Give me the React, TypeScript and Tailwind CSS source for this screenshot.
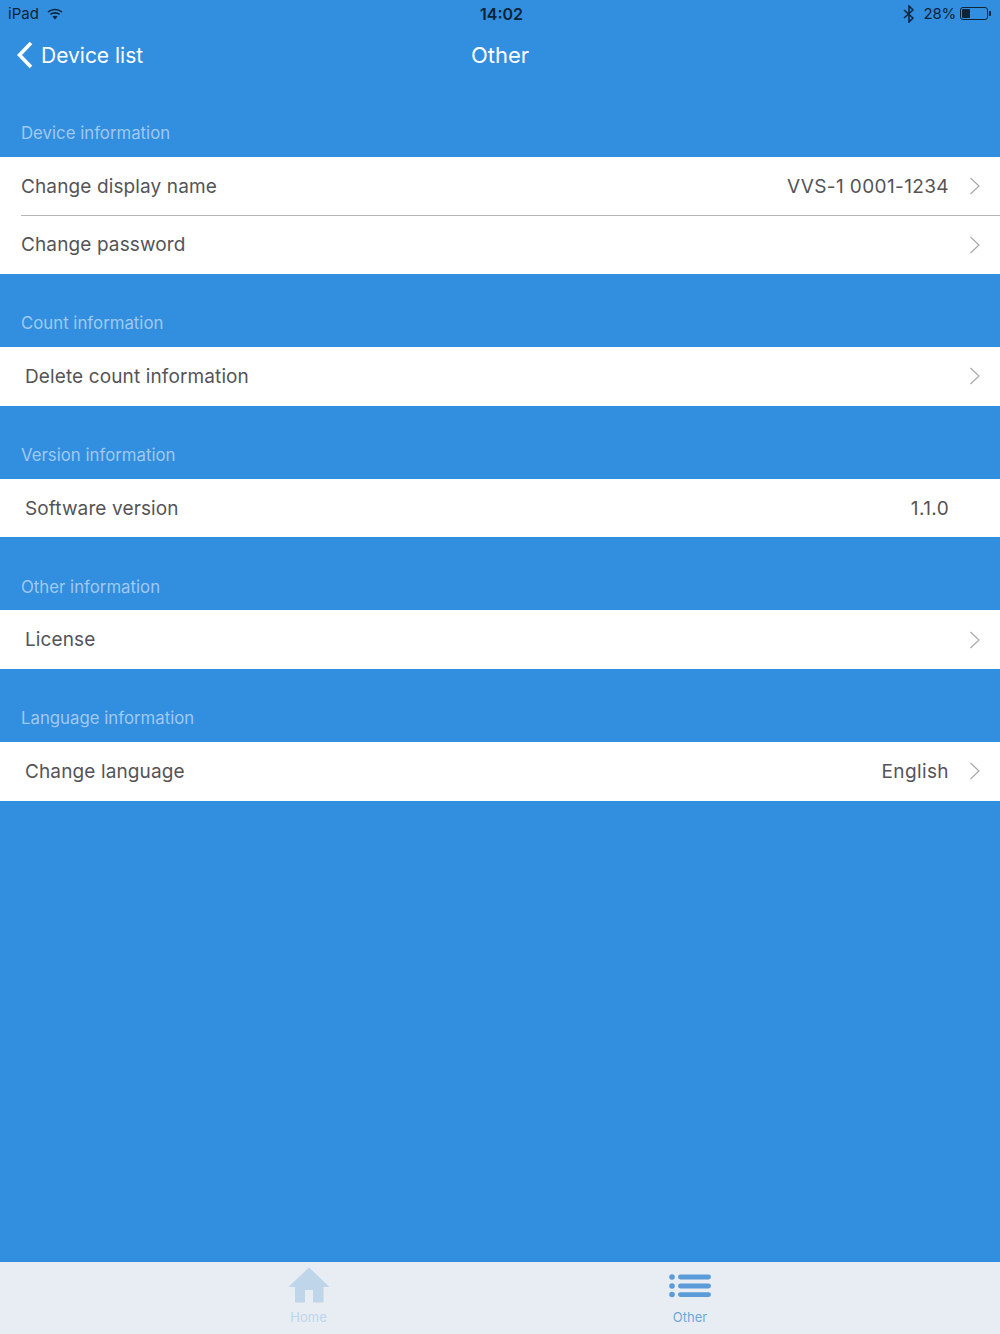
import React from "react";

const font = { fontFamily: '"Inter", "Liberation Sans", sans-serif' };

function Chevron() {
  return (
    <svg width="12" height="18" viewBox="0 0 12 18" fill="none" className="shrink-0">
      <path d="M2.5 1L11 9L2.5 17" stroke="#a9a9ac" strokeWidth="1.2" />
    </svg>
  );
}

function Header({ title }: { title: string }) {
  return (
    <div className="h-[73px] flex items-end pl-[21px] pb-[12.6px]">
      <span className="text-[16.8px] leading-[21px] text-[#a0c9f0]">{title}</span>
    </div>
  );
}

function Row({
  label,
  value,
  chevron = true,
  inset = 25,
}: {
  label: string;
  value?: string;
  chevron?: boolean;
  inset?: 21 | 25;
}) {
  return (
    <div className={`h-[58.67px] flex items-center pr-[20px] ${inset === 21 ? "pl-[21px]" : "pl-[25px]"}`}>
      <span className="pt-[1.6px] text-[19px] tracking-[0.12px] text-[#545458]">{label}</span>
      <span className="pt-[1.6px] ml-auto text-[19px] tracking-[0.38px] text-[#545458]">{value}</span>
      <span className="w-[12px] ml-[19px] flex justify-center">{chevron && <Chevron />}</span>
    </div>
  );
}

export default function App() {
  return (
    <div style={font} className="w-[1000px] h-[1334px] bg-[#328edf] flex flex-col overflow-hidden">
      <div className="h-[27px] flex items-center relative pl-[8px] pr-[9px] text-[15px] text-[#0d2438]">
        <span className="pt-[1px]">iPad</span>
        <svg width="16" height="12" viewBox="0 0 16 12" className="ml-[8px]" fill="none" stroke="#0d2438">
          <path d="M1 4C5 0.6 11 0.6 15 4" strokeWidth="1.6" />
          <path d="M3.4 6.4C6 4.3 10 4.3 12.6 6.4" strokeWidth="1.6" />
          <path d="M8 11.5L5.4 8.6C6.9 7.6 9.1 7.6 10.6 8.6Z" fill="#0d2438" stroke="none" />
        </svg>
        <span className="absolute left-[480px] text-[16px] font-semibold">14:02</span>
        <svg width="12" height="18" viewBox="0 0 12 18" className="ml-auto" fill="none" stroke="#0d2438" strokeWidth="1.5">
          <path d="M1 5L10 13L6 17V1L10 5L1 13" />
        </svg>
        <span className="ml-[8px] pt-[1px] tracking-[-0.2px]">28%</span>
        <div className="ml-[4px] w-[28px] h-[13px] rounded-[3px] border border-[#0d2438] p-[1px]">
          <div className="h-full w-[8px] bg-[#0d2438] rounded-[1px]"></div>
        </div>
        <div className="ml-[1px] w-[2px] h-[5px] rounded-r-[1px] bg-[#0d2438]"></div>
      </div>

      <div className="h-[56.67px] relative flex items-center justify-center text-white text-[22px]">
        <div className="absolute left-[16px] top-0 h-full flex items-center text-[21px]">
          <svg width="17" height="28" viewBox="0 0 17 28" fill="none" stroke="white" strokeWidth="3.6" className="mr-[8px]">
            <path d="M15 2L3.5 14L15 26" />
          </svg>
          <span>Device list</span>
        </div>
        <span>Other</span>
      </div>

      <Header title="Device information" />
      <div className="bg-white">
        <Row label="Change display name" value="VVS-1 0001-1234" inset={21} />
        <div className="ml-[21px] h-px -mb-px bg-[#b5b5b7]"></div>
        <Row label="Change password" inset={21} />
      </div>

      <Header title="Count information" />
      <div className="bg-white">
        <Row label="Delete count information" />
      </div>

      <Header title="Version information" />
      <div className="bg-white">
        <Row label="Software version" value="1.1.0" chevron={false} />
      </div>

      <Header title="Other information" />
      <div className="bg-white">
        <Row label="License" />
      </div>

      <Header title="Language information" />
      <div className="bg-white">
        <Row label="Change language" value="English" />
      </div>

      <div className="flex-1"></div>

      <div className="h-[72px] bg-[#e8edf4] flex">
        <div className="w-[617px] flex flex-col items-center pt-[5px]">
          <svg width="42" height="36" viewBox="0 0 42 36" fill="#bed5ea">
            <path d="M21 0.5L41.5 20H35.5V35.5H25V23H17V35.5H7V20H0.5Z" />
          </svg>
          <span className="mt-[6px] text-[13px] leading-[16px] text-[#bed5ea]">Home</span>
        </div>
        <div className="w-[146px] flex flex-col items-center pt-[11px]">
          <svg width="42" height="26" viewBox="0 0 42 26" fill="#5a9bd8">
            <circle cx="3" cy="4" r="2.8" />
            <circle cx="3" cy="13" r="2.8" />
            <circle cx="3" cy="21.5" r="2.8" />
            <rect x="9" y="1.6" width="33" height="4.8" rx="2.4" />
            <rect x="9" y="10.6" width="33" height="4.8" rx="2.4" />
            <rect x="9" y="19.2" width="33" height="4.8" rx="2.4" />
          </svg>
          <span className="mt-[10px] text-[13px] leading-[16px] text-[#6ea7dc]">Other</span>
        </div>
      </div>
    </div>
  );
}
